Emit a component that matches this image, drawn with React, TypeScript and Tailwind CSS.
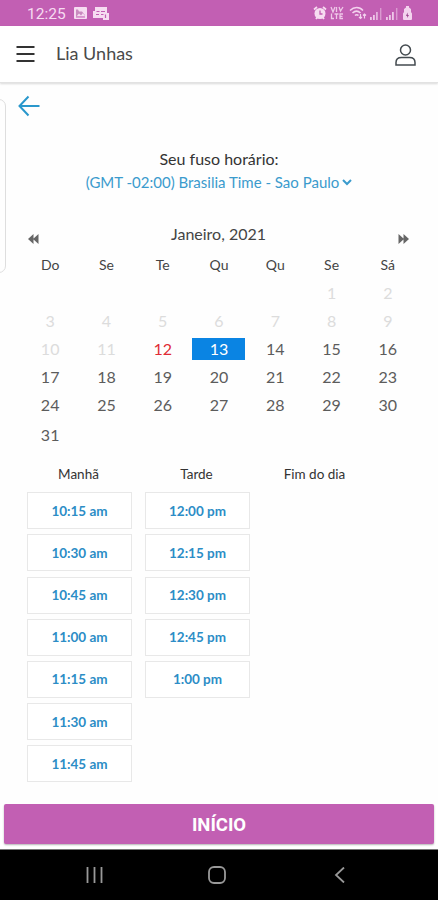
import React, { useState } from 'react';

const weekdays = ['Do', 'Se', 'Te', 'Qu', 'Qu', 'Se', 'Sá'];

const periods = [
  {
    name: 'Manhã',
    slots: ['10:15 am', '10:30 am', '10:45 am', '11:00 am', '11:15 am', '11:30 am', '11:45 am'],
  },
  { name: 'Tarde', slots: ['12:00 pm', '12:15 pm', '12:30 pm', '12:45 pm', '1:00 pm'] },
  { name: 'Fim do dia', slots: [] },
];

const TODAY = 12;
// January 2021 starts on a Friday
const days = [...Array(5).fill(0), ...Array.from({ length: 31 }, (_, i) => i + 1)];

function SignalIcon({ full }: { full?: boolean }) {
  return (
    <svg width="12" height="13" viewBox="0 0 12 13" fill="#eec8e8">
      <rect x="0" y="10" width="1.8" height="3" />
      <rect x="3" y="8" width="1.8" height="5" />
      <rect x="6" y="5" width="1.8" height="8" opacity={full ? 1 : 0.8} />
      <rect x="10" y="1" width="1.4" height="12" opacity="0.55" />
    </svg>
  );
}

function StatusBar() {
  return (
    <div className="flex h-[26px] shrink-0 items-center bg-[#c25fb3] pl-[27px] pr-[26px]">
      <span className="mt-[3px] w-[47px] font-['Roboto',sans-serif] text-[15.5px] leading-none text-[#f6dcf1]">12:25</span>
      {/* Picture notification */}
      <svg width="13" height="12" viewBox="0 0 13 12">
        <rect width="13" height="12" rx="1" fill="#f6dcf1" />
        <path d="M2 9.500V2.500h2l1 2h3l2.500 3v2z" fill="#c98abf" />
        <path d="M2.500 9.500l2.500-3 2 2 2-2.500 2 3.500z" fill="#f6dcf1" />
        <path d="M2 10h9" stroke="#c25fb3" />
      </svg>
      {/* News notification */}
      <svg className="ml-[6px]" width="16" height="13" viewBox="0 0 16 13">
        <path d="M2 0h12v6h2v7h-6v-2H0V4h2z" fill="#f6dcf1" />
        <path d="M3.500 4.500h3M3 7.500h3M8 4.500h4M8 7.500h2.500M12.500 7.500v3.500" stroke="#c25fb3" strokeWidth="1.200" />
      </svg>
      <div className="ml-auto flex items-center">
        <svg width="14" height="14" viewBox="0 0 14 14" fill="none">
          <circle cx="7" cy="7.500" r="5.500" fill="#f6dcf1" />
          <path d="M1 3.500l3-2.500M13 3.500L10 1M3 13l1.500-2M11 13l-1.500-2" stroke="#f6dcf1" strokeWidth="1.800" />
          <path d="M7 4.500v3.500h2.500" stroke="#c25fb3" strokeWidth="1.300" />
        </svg>
        <svg className="ml-[3px]" width="14" height="14" viewBox="0 0 14 14" fill="none" stroke="#eec8e8" strokeWidth="1.300">
          <path d="M1 1l2 5 2-5M6.500 6V1M9 1l1.500 4L13 1M1.500 7.500V12.500H4M4.500 8h4M6.500 8v5M13 8h-3v4.500h3M10 10.300h2.500" />
        </svg>
        <svg className="ml-[5px]" width="18" height="14" viewBox="0 0 18 14" fill="none" stroke="#f3d3ee" strokeWidth="1.500">
          <path d="M1 4.500c4-4 9.500-4 13 0M3.500 7c2.500-2.500 5.500-2.500 8 0M6 9.500c1-1 2.500-1 3.500 0" />
          <path d="M11.500 8v4.500M10 11l1.500 1.500L13 11M15.500 12.500V8M14 9.500L15.500 8 17 9.500" strokeWidth="1.200" />
        </svg>
        <span className="ml-[3px]">
          <SignalIcon />
        </span>
        <span className="ml-[4px]">
          <SignalIcon full />
        </span>
        <svg className="ml-[5px]" width="9" height="14" viewBox="0 0 9 14">
          <path d="M3 0h3v1.500l2 1.500v3l1 1.500V13a1 1 0 0 1-1 1H1a1 1 0 0 1-1-1V7.500L1 6V3l2-1.500z" fill="#f3d3ee" />
          <path d="M4.500 6.500L3 10h1.200v2L6 9H4.800z" fill="#9d4590" />
        </svg>
      </div>
    </div>
  );
}

function Header() {
  return (
    <header className="z-10 flex h-[57px] shrink-0 items-center border-b border-[#e2e2e2] bg-white pl-4 pr-[22px] shadow-[0_1px_2px_rgba(0,0,0,0.15)]">
      <svg width="19" height="18" viewBox="0 0 19 18" stroke="#333" strokeWidth="2">
        <path d="M0.500 2h18M0.500 9h18M0.500 16h18" />
      </svg>
      <h1 className="ml-[21px] mt-[-3px] text-[18px] leading-6 text-[#4a4a4a]">Lia Unhas</h1>
      <svg className="ml-auto mt-[2px]" width="21" height="22" viewBox="0 0 21 22" fill="none" stroke="#444b50" strokeWidth="1.500">
        <circle cx="10.500" cy="6" r="5" />
        <path d="M1 21v-2.500c0-3.500 2.500-5 5.500-5h8c3 0 5.500 1.500 5.500 5V21z" />
      </svg>
    </header>
  );
}

function DoubleArrow({ flip }: { flip?: boolean }) {
  return (
    <svg className={flip ? 'rotate-180' : ''} width="11" height="10" viewBox="0 0 11 10" fill="#666">
      <path d="M5.500 0v10L0 5zM10.500 0v10L5 5z" />
    </svg>
  );
}

function Calendar({ selected, onSelect }: { selected: number; onSelect: (day: number) => void }) {
  const dayColor = (day: number) => {
    if (day === selected) return 'bg-[#0a84e3] text-white';
    if (day === TODAY) return 'text-[#e02b35]';
    if (day < TODAY) return 'text-[#dcdcdc]';
    return 'text-[#5c5c5c]';
  };

  return (
    <section className="mt-[26px] px-[22px]">
      <div className="flex h-7 items-center justify-between pl-[6px] pr-[7px]">
        <button className="mt-[10px]">
          <DoubleArrow />
        </button>
        <h2 className="text-[16px] text-[#444]">Janeiro, 2021</h2>
        <button className="mt-[10px]">
          <DoubleArrow flip />
        </button>
      </div>
      <div className="mt-[3px] grid grid-cols-7 text-center text-[14px] leading-7 text-[#444]">
        {weekdays.map((name, i) => (
          <div key={i}>{name}</div>
        ))}
      </div>
      <div className="grid auto-rows-[28px] grid-cols-7 items-center justify-items-center text-[16px]">
        {days.map((day, i) =>
          day === 0 ? (
            <span key={i} />
          ) : (
            <button
              key={i}
              onClick={() => onSelect(day)}
              className={`h-[22px] w-[53px] leading-[22px] ${dayColor(day)} ${day === 31 ? 'mt-[4px]' : ''}`}
            >
              {day}
            </button>
          )
        )}
      </div>
    </section>
  );
}

export default function App() {
  const [selected, setSelected] = useState(13);

  return (
    <div className="flex h-[900px] w-[438px] flex-col overflow-hidden bg-white font-['Lato','Liberation_Sans',sans-serif]">
      <StatusBar />
      <Header />

      <main className="relative flex-1 bg-[#fefefe]">
        {/* Edge panel handle */}
        <div className="absolute -left-2 top-4 h-[174px] w-[14px] rounded-[7px] border border-[#dedede]" />

        <button className="ml-[18px] mt-3 block">
          <svg width="22" height="22" viewBox="0 0 22 22" fill="none" stroke="#2a98cc" strokeWidth="2">
            <path d="M10.500 1.500L1.500 11l9 9.500M1.500 11h20" />
          </svg>
        </button>

        <div className="mt-[30px] text-center">
          <p className="text-[16px] leading-6 text-[#333]">Seu fuso horário:</p>
          <button className="mx-auto flex h-[23px] items-center text-[15px] text-[#3b9bcd]">
            (GMT -02:00) Brasilia Time - Sao Paulo
            <svg className="ml-[3px]" width="10" height="7" viewBox="0 0 10 7" fill="none" stroke="currentColor" strokeWidth="2">
              <path d="M1 1l4 4 4-4" />
            </svg>
          </button>
        </div>

        <Calendar selected={selected} onSelect={setSelected} />

        <section className="mt-4 grid grid-cols-[105px_105px_105px] gap-x-[13px] pl-[27px]">
          {periods.map((period) => (
            <div key={period.name} className="flex flex-col gap-[5.200px]">
              <h3 className="-ml-[2px] h-[24px] text-center text-[13.500px] leading-[23px] text-[#333]">{period.name}</h3>
              {period.slots.map((slot) => (
                <button
                  key={slot}
                  className="h-[37px] border border-[#e8e8e8] bg-white text-center text-[13.500px] font-bold text-[#2c8dc6]"
                >
                  {slot}
                </button>
              ))}
            </div>
          ))}
        </section>
      </main>

      <footer className="shrink-0 px-1 pb-[5px]">
        <button className="block h-[40px] w-full rounded-[2px] bg-[#c25fb3] pt-[3px] font-['Roboto',sans-serif] text-[18.500px] font-bold text-white shadow-[0_1px_2px_rgba(0,0,0,0.3)]">
          INÍCIO
        </button>
      </footer>

      {/* Android navigation */}
      <nav className="flex h-[51px] shrink-0 items-center border-t border-[#777] bg-black pl-[86px]">
        <svg width="17" height="16" viewBox="0 0 17 16" stroke="#999" strokeWidth="1.800">
          <path d="M1.500 0v16M8.500 0v16M15.500 0v16" />
        </svg>
        <svg className="ml-[105px]" width="18" height="18" viewBox="0 0 18 18" fill="none" stroke="#999" strokeWidth="1.800">
          <rect x="1" y="1" width="16" height="16" rx="5" />
        </svg>
        <svg className="ml-[108px]" width="11" height="16" viewBox="0 0 11 16" fill="none" stroke="#999" strokeWidth="1.800">
          <path d="M10 0.500L2 8l8 7.500" />
        </svg>
      </nav>
    </div>
  );
}
